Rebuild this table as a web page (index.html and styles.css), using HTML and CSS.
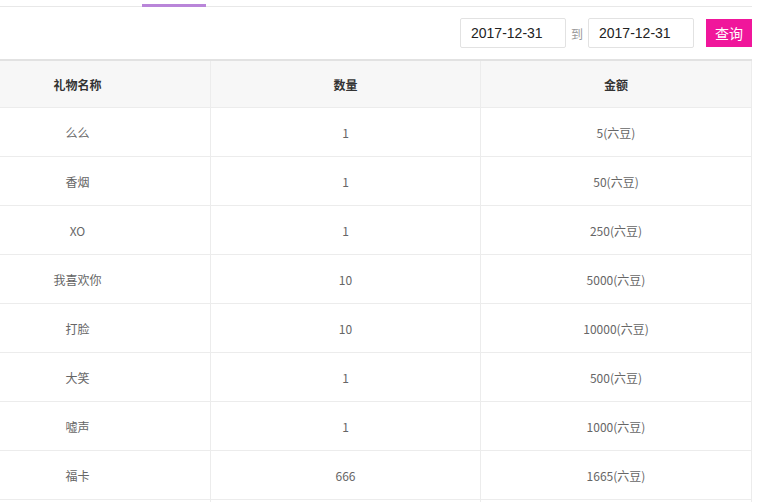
FILE: index.html
```html
<!DOCTYPE html>
<html lang="zh">

<head>
    <meta charset="UTF-8">
    <title>礼物记录</title>
    <link rel="stylesheet" href="styles.css">
</head>

<body>
    <div class="page">
        <div class="tabs">
            <span class="tab-active"></span>
        </div>

        <form class="filter">
            <input type="text" class="date-input" value="2017-12-31">
            <span class="sep">到</span>
            <input type="text" class="date-input" value="2017-12-31">
            <button type="button" class="btn-search">查询</button>
        </form>

        <table class="gift-table">
            <thead>
                <tr>
                    <th class="col-name">礼物名称</th>
                    <th class="col-count">数量</th>
                    <th class="col-amount">金额</th>
                </tr>
            </thead>
            <tbody>
                <tr><td>么么</td><td>1</td><td>5(六豆)</td></tr>
                <tr><td>香烟</td><td>1</td><td>50(六豆)</td></tr>
                <tr><td>XO</td><td>1</td><td>250(六豆)</td></tr>
                <tr><td>我喜欢你</td><td>10</td><td>5000(六豆)</td></tr>
                <tr><td>打脸</td><td>10</td><td>10000(六豆)</td></tr>
                <tr><td>大笑</td><td>1</td><td>500(六豆)</td></tr>
                <tr><td>嘘声</td><td>1</td><td>1000(六豆)</td></tr>
                <tr><td>福卡</td><td>666</td><td>1665(六豆)</td></tr>
                <tr class="row-empty"><td></td><td></td><td></td></tr>
            </tbody>
        </table>
    </div>
</body>

</html>
```

FILE: styles.css
```css
body {
    margin: 0;
    padding: 0;
    background: #fff;
    font-family: "Noto Sans CJK SC", "Liberation Sans", sans-serif;
    color: #666;
    overflow: hidden;
}

.page {
    width: 752px;
}

.tabs {
    display: flex;
    height: 6px;
    padding-left: 142px;
    border-bottom: 1px solid #e8e8e8;
}

.tab-active {
    width: 64px;
    height: 3px;
    margin-top: 4px;
    background-color: #b985d9;
}

.filter {
    display: flex;
    align-items: center;
    justify-content: flex-end;
    height: 52px;
    margin: 0;
}

.date-input {
    box-sizing: border-box;
    width: 106px;
    height: 30px;
    padding: 0 10px;
    border: 1px solid #e2e2e2;
    border-radius: 2px;
    font-family: "Liberation Sans", Arial, sans-serif;
    font-size: 14px;
    color: #222;
    outline: none;
}

.sep {
    margin: 0 5px 0 5px;
    font-size: 12px;
    color: #999;
    width: 12px;
}

.btn-search {
    height: 28px;
    width: 46px;
    margin-left: 12px;
    padding: 0;
    border: none;
    background-color: #f0169b;
    color: #fff;
    font-family: "Noto Sans CJK SC", sans-serif;
    font-size: 14px;
    cursor: pointer;
}

.gift-table {
    width: 808px;
    margin-left: -56px;
    border-collapse: collapse;
    table-layout: fixed;
    font-size: 12px;
}

.gift-table th,
.gift-table td {
    text-align: center;
    border: 1px solid #ececec;
    padding: 0;
}

.gift-table th {
    height: 46px;
    border-top: 2px solid #e2e2e2;
    background-color: #f7f7f7;
    color: #333;
    font-weight: bold;
}

.gift-table td {
    height: 48px;
}

.col-name {
    width: 265px;
}

.col-count {
    width: 269px;
}
```
